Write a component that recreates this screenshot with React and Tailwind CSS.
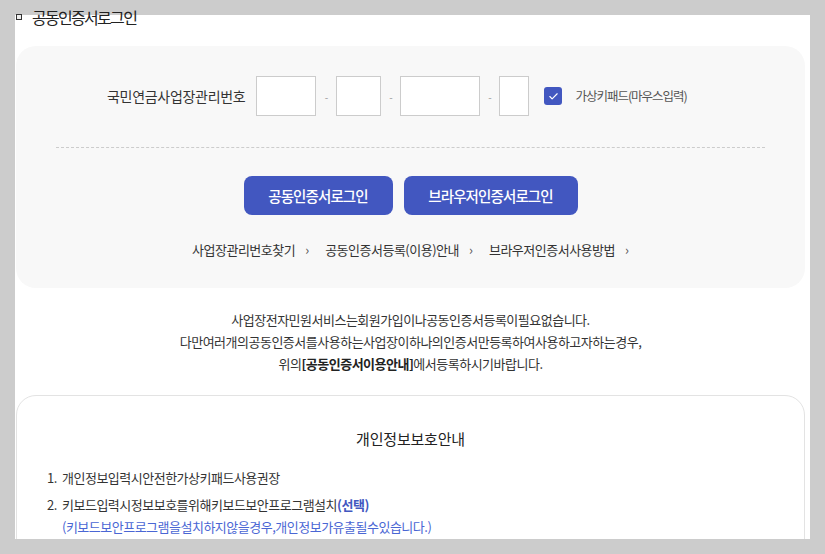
import { Check } from 'lucide-react';

const font = { fontFamily: '"Noto Sans CJK KR", "Noto Sans", sans-serif' };

export default function App() {
  const links = ['사업장관리번호찾기', '공동인증서등록(이용)안내', '브라우저인증서사용방법'];

  return (
    <div className="relative w-[825px] h-[554px] bg-[#cccccc] overflow-hidden" style={font}>
      {/* 제목 */}
      <div className="absolute left-[16px] top-[5px] z-10 flex items-center gap-[10px]">
        <span className="block w-[6px] h-[6px] border-[1.5px] border-[#333] bg-[#eee]" />
        <h2 className="text-[16px] leading-[24px] text-[#222] tracking-[-1.7px]">공동인증서로그인</h2>
      </div>

      <div className="ml-[15px] mt-[15px] w-[795px] h-[524px] bg-white overflow-hidden pl-px pr-[5px] pt-[31px]">
        {/* 로그인 박스 */}
        <div className="h-[242px] rounded-[20px] bg-[#f8f8f8] pt-[30px]">
          <div className="flex items-center pl-[91px]">
            <span className="text-[14px] text-[#333] tracking-[-0.3px] mr-[11px]">국민연금사업장관리번호</span>
            <input className="w-[60px] h-[40px] border border-[#cccccc] bg-white" />
            <span className="w-[20px] text-center text-[10px] text-[#999]">-</span>
            <input className="w-[45px] h-[40px] border border-[#cccccc] bg-white" />
            <span className="w-[19px] text-center text-[10px] text-[#999]">-</span>
            <input className="w-[80px] h-[40px] border border-[#cccccc] bg-white" />
            <span className="w-[19px] text-center text-[10px] text-[#999]">-</span>
            <input className="w-[30px] h-[40px] border border-[#cccccc] bg-white" />
            <span className="ml-[15px] w-[18px] h-[18px] rounded-[3px] bg-[#4257c0] flex items-center justify-center">
              <Check className="w-[11px] h-[11px] text-white" strokeWidth={2.5} />
            </span>
            <span className="ml-[13px] text-[12.5px] text-[#555] tracking-[-1px]">가상키패드(마우스입력)</span>
          </div>

          <div className="mx-[40px] mt-[31px] border-t border-dashed border-[#cccccc]" />

          <div className="mt-[28px] flex justify-center gap-[11px]">
            <button className="w-[149px] h-[39px] rounded-[8px] bg-[#4257c0] text-white text-[14.5px] tracking-[-0.9px] font-medium">
              공동인증서로그인
            </button>
            <button className="w-[174px] h-[39px] rounded-[8px] bg-[#4257c0] text-white text-[14.5px] tracking-[-0.9px] font-medium">
              브라우저인증서로그인
            </button>
          </div>

          <div className="mt-[25px] flex justify-center gap-[16px] text-[13px] text-[#333] tracking-[-0.5px]">
            {links.map(l => (
              <span key={l} className="flex items-center gap-[10px]">
                {l}
                <span className="text-[#555] text-[13px] tracking-normal">›</span>
              </span>
            ))}
          </div>
        </div>

        {/* 안내 문구 */}
        <div className="mt-[21px] text-center text-[13px] leading-[22px] text-[#333] tracking-[-0.5px]">
          <p>사업장전자민원서비스는회원가입이나공동인증서등록이필요없습니다.</p>
          <p>다만여러개의공동인증서를사용하는사업장이하나의인증서만등록하여사용하고자하는경우,</p>
          <p>
            위의<b className="font-bold text-[#222]">[공동인증서이용안내]</b>에서등록하시기바랍니다.
          </p>
        </div>

        {/* 개인정보보호안내 */}
        <div className="mt-[20px] h-[200px] rounded-[20px] border border-[#e3e3e3] bg-white pt-[32px] px-[30px]">
          <h3 className="text-center text-[15px] leading-[22px] text-[#222] tracking-[-0.2px]">개인정보보호안내</h3>
          <ol className="mt-[17px] text-[13px] leading-[22px] text-[#333] tracking-[-0.5px]">
            <li className="flex">
              <span className="w-[15px]">1.</span>
              <span>개인정보입력시안전한가상키패드사용권장</span>
            </li>
            <li className="mt-[5px] flex">
              <span className="w-[15px]">2.</span>
              <span>
                키보드입력시정보보호를위해키보드보안프로그램설치<b className="font-bold text-[#4257c0]">(선택)</b>
              </span>
            </li>
            <li className="pl-[15px] text-[#4a66d4]">
              (키보드보안프로그램을설치하지않을경우,개인정보가유출될수있습니다.)
            </li>
          </ol>
        </div>
      </div>
    </div>
  );
}
